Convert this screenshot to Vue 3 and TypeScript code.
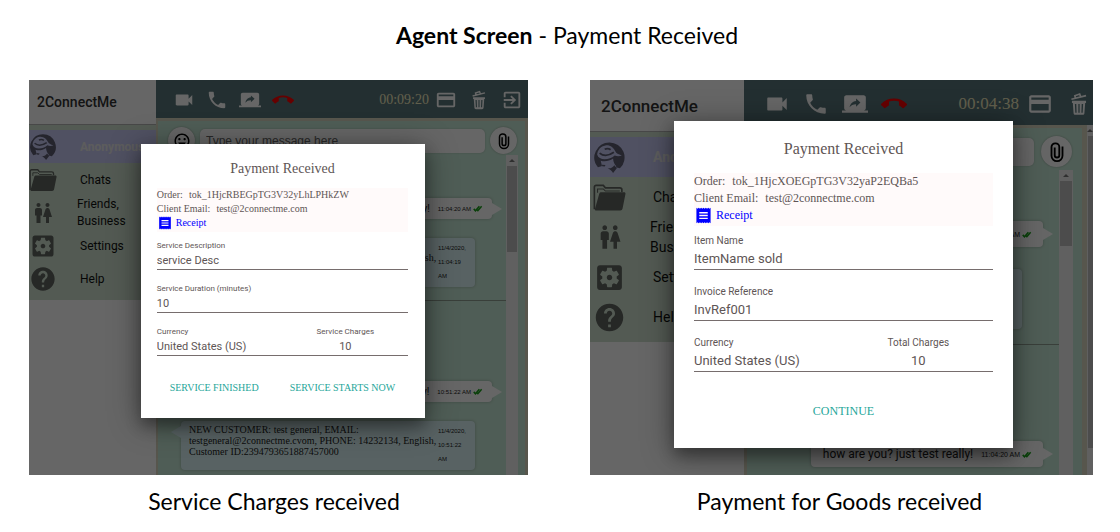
<script setup lang="ts">
import { h } from 'vue'

interface Shape {
  d: string
  line?: number
  paint?: string
}

interface Message {
  kind: 'sent' | 'received' | 'rule'
  text?: string
  time?: string
}

interface Screen {
  id: string
  timer: string
  order: string
  fields: { label: string; value: string }[]
  chargeLabel: string
  actions: string[]
  caption: string
  canLeave: boolean
  pageScroll: boolean
}

const lilac = '#c8cbf4'

const icons: Record<string, Shape[]> = {
  video: [{ d: 'M17 10.5V7c0-.55-.45-1-1-1H4c-.55 0-1 .45-1 1v10c0 .55.45 1 1 1h12c.55 0 1-.45 1-1v-3.5l4 4v-11l-4 4z' }],
  phone: [{ d: 'M6.62 10.79c1.44 2.83 3.76 5.14 6.59 6.59l2.2-2.2c.27-.27.67-.36 1.02-.24 1.12.37 2.33.57 3.57.57.55 0 1 .45 1 1V20c0 .55-.45 1-1 1-9.39 0-17-7.61-17-17 0-.55.45-1 1-1h3.5c.55 0 1 .45 1 1 0 1.25.2 2.45.57 3.57.11.35.03.74-.25 1.02l-2.2 2.2z' }],
  share: [{ d: 'M20 18c1.1 0 1.99-.9 1.99-2L22 6c0-1.11-.9-2-2-2H4c-1.11 0-2 .89-2 2v10c0 1.1.89 2 2 2H0v2h24v-2h-4zm-7-3.53v-2.19c-2.78 0-4.61.85-6 2.72.56-2.67 2.11-5.33 6-5.87V7l4 3.73-4 3.74z' }],
  hangup: [{ d: 'M12 9c-1.6 0-3.15.25-4.6.72v3.1c0 .39-.23.74-.56.9-.98.49-1.87 1.12-2.66 1.85-.18.18-.43.28-.7.28-.28 0-.53-.11-.71-.29L.29 13.08c-.18-.17-.29-.42-.29-.7 0-.28.11-.53.29-.71C3.34 8.78 7.46 7 12 7s8.66 1.78 11.71 4.67c.18.18.29.43.29.71 0 .28-.11.53-.29.71l-2.48 2.48c-.18.18-.43.29-.71.29-.27 0-.52-.11-.7-.28-.79-.74-1.69-1.36-2.67-1.85-.33-.16-.56-.5-.56-.9v-3.1C15.15 9.25 13.6 9 12 9z' }],
  card: [{ d: 'M20 4H4c-1.11 0-1.99.89-1.99 2L2 18c0 1.11.89 2 2 2h16c1.11 0 2-.89 2-2V6c0-1.11-.89-2-2-2zm0 14H4v-6h16v6zm0-10H4V6h16v2z' }],
  trash: [
    { d: 'M5.5 9h13v2h-.8L17 20.5c-.1.9-.7 1.5-1.6 1.5H8.6c-.9 0-1.5-.6-1.6-1.5L6.3 11h-.8zM8.2 12l.4 8h1.2l-.3-8zM11.4 12v8h1.2v-8zM14.5 12l-.3 8h1.2l.4-8z' },
    { d: 'M5 7.6L18.5 4.2M8.6 6.2L8.2 4.4L12.6 2.8L13.4 4.8', line: 1.6 },
  ],
  exit: [{ d: 'M10.09 15.59L11.5 17l5-5-5-5-1.41 1.41L12.67 11H3v2h9.67l-2.58 2.59zM19 3H5c-1.11 0-2 .9-2 2v4h2V5h14v14H5v-4H3v4c0 1.1.89 2 2 2h14c1.1 0 2-.9 2-2V5c0-1.1-.9-2-2-2z' }],
  avatar: [
    { d: 'M12 1A11 11 0 0 0 3.600 19.100L8 17.800l7 1 4.600 1.100A11 11 0 0 0 12 1z' },
    { d: 'M3 9.800C3.400 6.500 5.500 3.700 9 3.200c3.500-.4 6 1.500 7.300 4.500.6 1.300 2 2 4.700 2.900-1.800.8-3.700.7-5.200 0-2.200 1.900-4.600 2.700-7.300 2.700C5.800 13.200 3.700 12.200 3 9.800z', paint: lilac },
    { d: 'M4.800 8.800c2.600 2.200 6.600 2 10.400-.6M8.500 6c1.500-.7 3-.6 4.300.3', line: 1.3 },
    { d: 'M5.600 14.300c3 1 6.300.3 9-1.500.2 2.600 1 4.200 2.400 5.600l-2.800 3.400-4.400-2.200H6.600l-.2-2z', paint: lilac },
    { d: 'M6.500 17.200l2.600.3-.6 1.100-1.800-.2zM10.800 19.800c2 .3 3.700-.6 4.700-2.200l1.800 2.200-2.700 3.400c-.9-1.500-2.200-2.500-3.800-3.400z' },
  ],
  folder: [
    { d: 'M1 20.5V4.5C1 3.7 1.5 3.2 2.3 3.2h5.2L9 5h10.5c.9 0 1.5.6 1.5 1.4V8', line: 1.2 },
    { d: 'M5.8 8.2h16.8c.7 0 1.2.5 1 1.2L21.5 20c-.2.9-.8 1.4-1.7 1.4H2.2c-.6 0-1-.5-.8-1.1L4.6 9.1c.2-.6.6-.9 1.2-.9z' },
    { d: 'M3.3 8.5V5.8h4.2L9 7.3h10.5', line: 0.8 },
  ],
  people: [{ d: 'M5.5 22v-7.5H4V9c0-1.1.9-2 2-2h3c1.1 0 2 .9 2 2v5.5H9.5V22h-4zM18 22v-6h3l-2.54-7.63C18.18 7.55 17.42 7 16.56 7h-.12c-.86 0-1.63.55-1.9 1.37L12 16h3v6h3zM7.5 6c1.11 0 2-.89 2-2s-.89-2-2-2-2 .89-2 2 .89 2 2 2zm9 0c1.11 0 2-.89 2-2s-.89-2-2-2-2 .89-2 2 .89 2 2 2z' }],
  settings: [{ d: 'M12 10c-1.1 0-2 .9-2 2s.9 2 2 2 2-.9 2-2-.9-2-2-2zm7-7H5c-1.11 0-2 .9-2 2v14c0 1.1.89 2 2 2h14c1.11 0 2-.9 2-2V5c0-1.1-.89-2-2-2zm-1.75 9c0 .23-.02.46-.05.68l1.48 1.16c.13.11.17.3.08.45l-1.4 2.42c-.09.15-.27.21-.43.15l-1.74-.7c-.36.28-.76.51-1.18.69l-.26 1.85c-.03.17-.18.3-.35.3h-2.8c-.17 0-.32-.13-.35-.29l-.26-1.85c-.43-.18-.82-.41-1.18-.69l-1.74.7c-.16.06-.34 0-.43-.15l-1.4-2.42c-.09-.15-.05-.34.08-.45l1.48-1.16c-.03-.23-.05-.46-.05-.69 0-.23.02-.46.05-.68l-1.48-1.16c-.13-.11-.17-.3-.08-.45l1.4-2.42c.09-.15.27-.21.43-.15l1.74.7c.36-.28.76-.51 1.18-.69l.26-1.85c.03-.17.18-.3.35-.3h2.8c.17 0 .32.13.35.29l.26 1.85c.43.18.82.41 1.18.69l1.74-.7c.16-.06.34 0 .43.15l1.4 2.42c.09.15.05.34-.08.45l-1.48 1.16c.03.23.05.46.05.69z' }],
  help: [{ d: 'M12 2C6.48 2 2 6.48 2 12s4.48 10 10 10 10-4.48 10-10S17.52 2 12 2zm1 17h-2v-2h2v2zm2.07-7.75l-.9.92C13.45 12.9 13 13.5 13 15h-2v-.5c0-1.1.45-2.1 1.17-2.83l1.24-1.26c.37-.36.59-.86.59-1.41 0-1.1-.9-2-2-2s-2 .9-2 2H8c0-2.21 1.79-4 4-4s4 1.79 4 4c0 .88-.36 1.68-.93 2.25z' }],
  smile: [{ d: 'M11.99 2C6.47 2 2 6.48 2 12s4.47 10 9.99 10C17.52 22 22 17.52 22 12S17.52 2 11.99 2zM12 20c-4.42 0-8-3.58-8-8s3.58-8 8-8 8 3.58 8 8-3.58 8-8 8zm3.5-9c.83 0 1.5-.67 1.5-1.5S16.33 8 15.5 8 14 8.67 14 9.5s.67 1.5 1.5 1.5zm-7 0c.83 0 1.5-.67 1.5-1.5S9.33 8 8.5 8 7 8.67 7 9.5 7.67 11 8.5 11zm3.5 6.5c2.33 0 4.31-1.46 5.11-3.5H6.89c.8 2.04 2.78 3.5 5.11 3.5z' }],
  clip: [{ d: 'M9.5 7v8.5a2.5 2.5 0 0 0 5 0V6.5a4 4 0 0 0-4-4h-.5a4 4 0 0 0-4 4V16a6 6 0 0 0 12 0V6', line: 2 }],
  ticks: [{ d: 'M2 13l4.5 5L17 6M11 16l2 2L23 6', line: 4 }],
  receipt: [{ d: 'M18 17H6v-2h12v2zm0-4H6v-2h12v2zm0-4H6V7h12v2zM2 23l1.7-1.5L5.3 23 7 21.5 8.7 23l1.6-1.5L12 23l1.7-1.5 1.6 1.5 1.7-1.5 1.7 1.5 1.6-1.5L22 23V1l-1.7 1.5L18.7 1 17 2.5 15.3 1l-1.6 1.5L12 1l-1.7 1.5L8.7 1 7 2.5 5.3 1 3.7 2.5 2 1z' }],
}

const Glyph = (props: { name: string }) =>
  h(
    'svg',
    { viewBox: '0 0 24 24', 'aria-hidden': 'true' },
    icons[props.name].map((s) =>
      h('path', {
        d: s.d,
        'fill-rule': 'evenodd',
        fill: s.line ? 'none' : (s.paint ?? 'currentColor'),
        stroke: s.line ? 'currentColor' : 'none',
        'stroke-width': s.line ?? 0,
      }),
    ),
  )
Glyph.props = ['name']

const menu = [
  { icon: 'avatar', label: 'Anonymous' },
  { icon: 'folder', label: 'Chats' },
  { icon: 'people', label: 'Friends, Business' },
  { icon: 'settings', label: 'Settings' },
  { icon: 'help', label: 'Help' },
]

const calls = [
  { icon: 'video', label: 'Video call' },
  { icon: 'phone', label: 'Voice call' },
  { icon: 'share', label: 'Share screen' },
  { icon: 'hangup', label: 'Hang up' },
]

const customer =
  'NEW CUSTOMER: test general, EMAIL: testgeneral@2connectme.cvom, PHONE: 14232134, English, Customer ID:2394793651887457000'
const question = 'how are you? just test really!'

const chats: Record<string, Message[]> = {
  service: [
    { kind: 'sent', text: question, time: '11:04:20 AM' },
    { kind: 'received', text: customer, time: '11/4/2020, 11:04:19 AM' },
    { kind: 'rule' },
    { kind: 'sent', text: question, time: '10:51:22 AM' },
    { kind: 'received', text: customer, time: '11/4/2020, 10:51:22 AM' },
  ],
  goods: [
    { kind: 'sent', text: question, time: '11:04:20 AM' },
    { kind: 'received', text: customer, time: '11/4/2020, 11:04:19 AM' },
    { kind: 'rule' },
    { kind: 'sent', text: question, time: '11:04:20 AM' },
  ],
}

const screens: Screen[] = [
  {
    id: 'service',
    timer: '00:09:20',
    order: 'tok_1HjcRBEGpTG3V32yLhLPHkZW',
    fields: [
      { label: 'Service Description', value: 'service Desc' },
      { label: 'Service Duration (minutes)', value: '10' },
    ],
    chargeLabel: 'Service Charges',
    actions: ['SERVICE FINISHED', 'SERVICE STARTS NOW'],
    caption: 'Service Charges received',
    canLeave: true,
    pageScroll: false,
  },
  {
    id: 'goods',
    timer: '00:04:38',
    order: 'tok_1HjcXOEGpTG3V32yaP2EQBa5',
    fields: [
      { label: 'Item Name', value: 'ItemName sold' },
      { label: 'Invoice Reference', value: 'InvRef001' },
    ],
    chargeLabel: 'Total Charges',
    actions: ['CONTINUE'],
    caption: 'Payment for Goods received',
    canLeave: false,
    pageScroll: true,
  },
]
</script>

<template>
  <main class="page">
    <h1 class="heading"><strong>Agent Screen</strong> - Payment Received</h1>
    <div class="gallery">
      <figure v-for="s in screens" :key="s.id" class="figure" :class="s.id">
        <div class="screen">
          <aside class="side">
            <div class="brand">2ConnectMe</div>
            <nav class="menu">
              <a v-for="m in menu" :key="m.icon" href="#" class="item" :class="m.icon">
                <span class="pic"><Glyph :name="m.icon" /></span>
                <span class="name">{{ m.label }}</span>
              </a>
            </nav>
          </aside>
          <section class="work">
            <header class="bar">
              <button v-for="c in calls" :key="c.icon" type="button" class="tool" :class="c.icon" :aria-label="c.label">
                <Glyph :name="c.icon" />
              </button>
              <time class="timer">{{ s.timer }}</time>
              <button type="button" class="tool" aria-label="Payment"><Glyph name="card" /></button>
              <button type="button" class="tool" aria-label="Delete"><Glyph name="trash" /></button>
              <button v-if="s.canLeave" type="button" class="tool" aria-label="Exit"><Glyph name="exit" /></button>
            </header>
            <div class="below">
              <div class="chat">
                <div class="compose">
                  <button type="button" class="round" aria-label="Emoji"><Glyph name="smile" /></button>
                  <input class="entry" type="text" placeholder="Type your message here" aria-label="Message" />
                  <button type="button" class="round" aria-label="Attach"><Glyph name="clip" /></button>
                </div>
                <div class="history">
                  <div class="messages">
                    <template v-for="(m, i) in chats[s.id]" :key="i">
                      <hr v-if="m.kind === 'rule'" class="rule" />
                      <div v-else class="bubble" :class="m.kind">
                        <span class="text">{{ m.text }}</span>
                        <span class="stamp">{{ m.time }}</span>
                        <Glyph v-if="m.kind === 'sent'" name="ticks" class="ticks" />
                      </div>
                    </template>
                  </div>
                  <div class="track"><span class="arrow"></span><span class="thumb"></span></div>
                </div>
              </div>
              <div v-if="s.pageScroll" class="track outer"><span class="arrow"></span><span class="thumb"></span></div>
            </div>
          </section>
          <div class="shade">
            <form class="dialog" @submit.prevent>
              <h2 class="title">Payment Received</h2>
              <div class="details">
                <div class="pair"><span>Order:</span><span>{{ s.order }}</span></div>
                <div class="pair"><span>Client Email:</span><span>test@2connectme.com</span></div>
                <a href="#" class="receipt"><Glyph name="receipt" />Receipt</a>
              </div>
              <div v-for="(f, i) in s.fields" :key="f.label" class="row">
                <div class="field">
                  <label :for="`${s.id}-${i}`">{{ f.label }}</label>
                  <input :id="`${s.id}-${i}`" type="text" :value="f.value" />
                </div>
              </div>
              <div class="row">
                <div class="field">
                  <label :for="`${s.id}-currency`">Currency</label>
                  <select :id="`${s.id}-currency`"><option>United States (US)</option></select>
                </div>
                <div class="field charge">
                  <label :for="`${s.id}-charge`">{{ s.chargeLabel }}</label>
                  <input :id="`${s.id}-charge`" type="text" value="10" />
                </div>
              </div>
              <div class="actions">
                <button v-for="a in s.actions" :key="a" type="button">{{ a }}</button>
              </div>
            </form>
          </div>
        </div>
        <figcaption class="caption">{{ s.caption }}</figcaption>
      </figure>
    </div>
  </main>
</template>

<style>
body {
  margin: 0;
  background: #fff;
}
</style>

<style scoped>
* {
  box-sizing: border-box;
}

.page {
  display: flex;
  flex-direction: column;
  min-height: 100vh;
  font-family: Roboto, "Liberation Sans", sans-serif;
}

button,
input,
select {
  margin: 0;
  padding: 0;
  border: 0;
  background: none;
  font: inherit;
  color: inherit;
}

a {
  color: inherit;
  text-decoration: none;
}

svg {
  display: block;
  flex: none;
}

.heading {
  margin: 0;
  padding: 20px 0 30px 14px;
  font: 400 23px/30px Lato, "Open Sans", sans-serif;
  text-align: center;
  color: #000;
}

.gallery {
  flex: 1;
  display: grid;
  grid-template-columns: 499fr 503fr;
  gap: 62px;
  padding: 0 27px 0 29px;
}

.figure {
  display: flex;
  flex-direction: column;
  min-width: 0;
  margin: 0;
}

.service {
  --side: 127px;
  --brand: 45px;
  --brand-size: 14px;
  --row: 33px;
  --indent: 51px;
  --text: 12px;
  --text-line: 17px;
  --pic: 28px;
  --people: 24px;
  --bar: 38px;
  --tool: 22px;
  --tool-gap: 11px;
  --timer: 14px;
  --bar-pad: 0 5px 0 17px;
  --round: 27px;
  --scroll: 12px;
  --entry: 24px;
  --chat-text: 10px;
  --stamp: 6px;
  --stamp-line: 14px;
  --sent: 21px;
  --thumb: 86px;
  --label: 8px;
  --label-line: 12px;
  --value: 11px;
  --value-line: 17px;
  --detail: 10px;
  --detail-line: 14px;
  --title: 14px;
}

.goods {
  --side: 154px;
  --brand: 52px;
  --brand-size: 17px;
  --row: 40px;
  --indent: 63px;
  --text: 14px;
  --text-line: 20px;
  --pic: 33px;
  --people: 28px;
  --bar: 45px;
  --tool: 26px;
  --tool-gap: 13px;
  --timer: 17px;
  --bar-pad: 0 1px 0 20px;
  --round: 31px;
  --scroll: 14px;
  --entry: 28px;
  --chat-text: 12px;
  --stamp: 7px;
  --stamp-line: 17px;
  --sent: 26px;
  --thumb: 65px;
  --label: 10px;
  --label-line: 14px;
  --value: 13px;
  --value-line: 21px;
  --detail: 12px;
  --detail-line: 17px;
  --title: 16px;
}

.screen {
  position: relative;
  flex: 1;
  display: flex;
  min-height: 340px;
  overflow: hidden;
  background: #fff;
}

.side {
  flex: none;
  width: var(--side);
  overflow: hidden;
}

.brand {
  display: flex;
  align-items: center;
  height: var(--brand);
  padding-left: 8px;
  border-bottom: 1px solid #b4b4b4;
  font-size: var(--brand-size);
  font-weight: 500;
  color: #333;
}

.goods .brand {
  padding-left: 11px;
}

.menu {
  padding: 5px 0;
  background: #d0e2d0;
}

.item {
  display: flex;
  align-items: center;
  height: var(--row);
  font-size: var(--text);
  line-height: var(--text-line);
  color: #111;
}

.service .item {
  padding-top: 1px;
}

.item.avatar {
  background: #c8cbf4;
  color: #e8e8e8;
  font-weight: 700;
}

.pic {
  flex: none;
  display: flex;
  justify-content: center;
  width: var(--indent);
  padding-right: calc(var(--indent) - var(--pic));
  color: #5f645f;
}

.goods .pic {
  padding-left: 3px;
  padding-right: 27px;
}

.avatar .pic {
  color: #5c5c72;
}

.pic svg {
  width: var(--pic);
  height: var(--pic);
}

.people .pic svg {
  width: var(--people);
  height: var(--people);
}

.people .name {
  width: 56px;
  margin-left: -3px;
}

.work {
  flex: 1;
  min-width: 0;
  display: flex;
  flex-direction: column;
}

.bar {
  flex: none;
  display: flex;
  align-items: center;
  gap: var(--tool-gap);
  height: var(--bar);
  padding: var(--bar-pad);
  padding-top: 2px;
  background: #58767a;
}

.tool,
.round {
  display: flex;
  align-items: center;
  justify-content: center;
  flex: none;
}

.tool {
  color: #fff;
}

.tool svg {
  width: var(--tool);
  height: var(--tool);
}

.tool.hangup {
  color: #f00;
}

.timer {
  margin: 0 -5px 0 auto;
  font-family: "Liberation Serif", serif;
  font-size: var(--timer);
  color: #f5eec0;
}

.below {
  flex: 1 1 0;
  display: flex;
  min-height: 0;
}

.chat {
  flex: 1;
  min-width: 0;
  display: flex;
  flex-direction: column;
  padding-right: 7px;
  background: #c6e8d6;
  border: 2px solid #d9d8c0;
  border-width: 3px 3px 0 2px;
}

.goods .chat {
  padding-right: 9px;
  border-width: 3px 5px 0 3px;
}

.compose {
  flex: none;
  display: flex;
  align-items: center;
  gap: 5px;
  padding: 6px 1px 1px 10px;
}

.goods .compose {
  gap: 7px;
  padding: 8px 1px 3px 12px;
}

.round {
  width: var(--round);
  height: var(--round);
  border-radius: 50%;
  background: #fff;
  box-shadow: 0 0 2px rgba(0, 0, 0, .3);
  color: #000;
}

.round svg {
  width: 18px;
  height: 18px;
}

.goods .round svg {
  width: 22px;
  height: 22px;
}

.entry {
  flex: 1;
  min-width: 0;
  height: var(--entry);
  padding: 0 6px;
  border-radius: 5px;
  background: #fff;
  box-shadow: 0 0 2px rgba(0, 0, 0, .2);
  font-family: "Liberation Sans", sans-serif;
  font-size: 12px;
}

.entry::placeholder {
  color: #666;
}

.history {
  flex: 1 1 0;
  display: flex;
  min-height: 0;
  overflow: hidden;
}

.messages {
  flex: 1;
  min-width: 0;
  display: flex;
  flex-direction: column;
  padding-top: 43px;
}

.goods .messages {
  padding-top: 51px;
}

.bubble {
  position: relative;
  flex: none;
  display: flex;
  align-items: center;
  border-radius: 4px;
  box-shadow: 0 0 3px rgba(0, 0, 0, .25);
  color: #222;
}

.bubble::after {
  content: "";
  position: absolute;
  border: 6px solid transparent;
}

.sent {
  align-self: flex-end;
  height: var(--sent);
  margin-right: 14px;
  padding: 0 9px 0 12px;
  background: #fff;
}

.goods .sent {
  margin-right: 16px;
  padding-right: 11px;
}

.sent::after {
  left: 100%;
  border-left: 10px solid #fff;
  border-right: 0;
}

.sent .text {
  margin-right: 8px;
  font-size: var(--chat-text);
}

.stamp {
  font-family: "Liberation Sans", sans-serif;
  font-size: var(--stamp);
  line-height: var(--stamp-line);
}

.ticks {
  width: 11px;
  height: 9px;
  margin-left: 1px;
  color: #18a018;
}

.received {
  align-items: flex-start;
  margin: 19px 31px 0 23px;
  padding: 3px 9px 4px 8px;
  background: #dcf6f8;
}

.goods .received {
  margin: 22px 37px 0 28px;
  padding: 4px 12px 5px 11px;
}

.received::after {
  top: 5px;
  right: 100%;
  border-right: 10px solid #dcf6f8;
  border-left: 0;
}

.received .text {
  flex: 1;
  font-family: "Liberation Serif", serif;
  font-size: var(--chat-text);
  line-height: 11px;
}

.goods .received .text {
  font-size: 11px;
  line-height: 12px;
}

.received .stamp {
  flex: none;
  width: 28px;
}

.goods .received .stamp {
  width: 34px;
}

.rule {
  flex: none;
  width: 100%;
  height: 1px;
  margin: 13px 0 80px;
  border: 0;
  background: #8f9f92;
}

.goods .rule {
  margin: 15px 0 96px;
}

.track {
  flex: none;
  display: flex;
  flex-direction: column;
  align-items: center;
  width: var(--scroll);
  background: #f1f1f1;
}

.arrow {
  margin: 4px 0;
  border: 3px solid transparent;
  border-top: 0;
  border-bottom: 3px solid #777;
}

.thumb {
  flex: none;
  align-self: stretch;
  height: var(--thumb);
  margin: 0 1px;
  background: #bdbdbd;
}

.outer {
  width: 6px;
}

.outer .thumb {
  height: 312px;
  margin-right: 0;
}

.shade {
  position: absolute;
  inset: 0;
  background: rgba(0, 0, 0, .6);
}

.dialog {
  width: 57%;
  margin: 64px 0 0 22.4%;
  padding: 15px 17px 19px 16px;
  background: #fff;
  box-shadow: 0 8px 14px rgba(0, 0, 0, .3), 0 4px 30px rgba(0, 0, 0, .4);
  color: #5e5555;
}

.goods .dialog {
  width: 67.4%;
  margin: 41px 0 0 16.7%;
  padding: 18px 20px 25px;
}

.title {
  margin: 0 0 9px;
  font: 400 var(--title)/20px "Liberation Serif", serif;
  text-align: center;
}

.goods .title {
  margin-bottom: 14px;
}

.details {
  padding-bottom: 2px;
  background: #fffafa;
  font-family: "Liberation Serif", serif;
  font-size: var(--detail);
  line-height: var(--detail-line);
}

.pair {
  display: flex;
  gap: 6px;
}

.goods .pair {
  gap: 7px;
}

.receipt {
  display: flex;
  align-items: center;
  gap: 4px;
  padding-left: 1px;
  color: #00f;
}

.receipt svg {
  width: var(--detail-line);
  height: var(--detail-line);
}

.row {
  display: flex;
  margin-top: 13px;
  border-bottom: 1px solid #766d6d;
}

.goods .row {
  margin-top: 15px;
}

.details + .row {
  margin-top: 8px;
}

.field {
  flex: 1 1 0;
  min-width: 0;
}

.field label {
  display: block;
  font-size: var(--label);
  line-height: var(--label-line);
}

.field input,
.field select {
  display: block;
  width: 100%;
  height: var(--value-line);
  appearance: none;
  font-size: var(--value);
  line-height: var(--value-line);
}

.charge,
.charge input {
  text-align: center;
}

.actions {
  display: flex;
  justify-content: center;
  gap: 31px;
  margin-top: 19px;
}

.goods .actions {
  margin-top: 27px;
}

.actions button {
  height: 24px;
  font-family: "Liberation Serif", serif;
  font-size: var(--detail);
  color: #26a69a;
}

.caption {
  flex: none;
  padding: 11px 0 16px;
  font: 400 23px/30px Lato, "Open Sans", sans-serif;
  text-align: center;
  color: #000;
}

.service .caption {
  padding-right: 9px;
}

.goods .caption {
  padding-right: 4px;
}
</style>
